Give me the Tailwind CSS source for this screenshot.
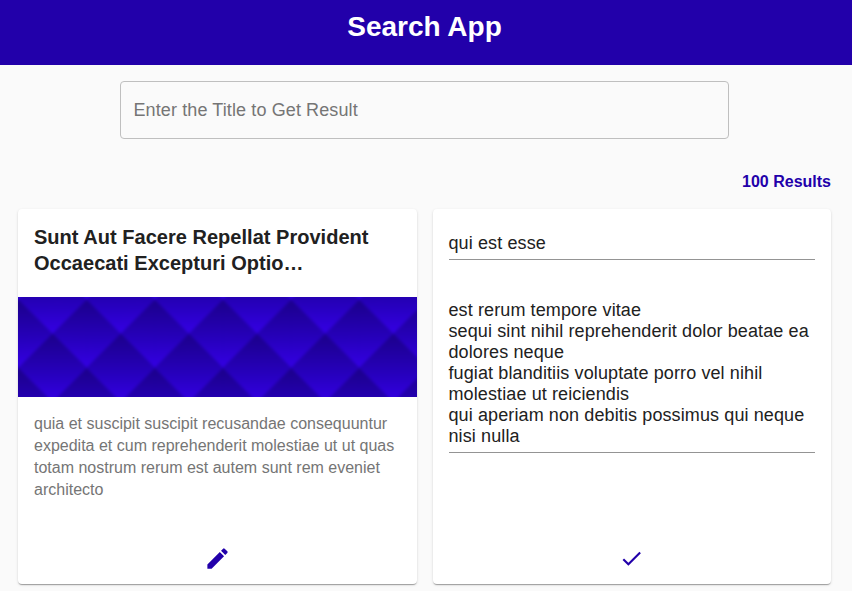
<!DOCTYPE html>
<html lang="en">
<head>
<meta charset="utf-8">
<title>Search App</title>
<script src="https://cdn.jsdelivr.net/npm/@tailwindcss/browser@4"></script>
</head>
<body class="h-[591px] overflow-hidden bg-[#fafafa] font-['Liberation_Sans',Arial,sans-serif] text-[#212121]">
<header class="flex h-[65px] justify-center bg-[#2200aa] pt-[7px] pr-[3px]">
  <h1 class="text-[28px] leading-[40px] font-bold text-white">Search App</h1>
</header>
<main class="pt-4">
  <label class="ml-[120px] block h-[58px] w-[609px] rounded border border-[#bfbfbf] px-[12.5px]">
    <input class="h-full w-full bg-transparent text-[18px] tracking-[0.11px] outline-none placeholder:text-[#757575]" placeholder="Enter the Title to Get Result">
  </label>
  <p class="mt-[30px] pr-[21px] text-right text-[16px] leading-[26px] font-bold text-[#2200aa]">100 Results</p>
  <section class="mt-[14px] flex gap-4 pl-[18px]">
    <article class="flex h-[375px] w-[399px] flex-col overflow-hidden rounded bg-white shadow-[0_2px_1px_-1px_rgba(0,0,0,0.2),0_1px_1px_0_rgba(0,0,0,0.14),0_1px_3px_0_rgba(0,0,0,0.12)]">
      <h2 class="h-[88px] px-4 pt-[15px] text-[20px] leading-[26px] font-bold tracking-[0.02px] whitespace-nowrap">Sunt Aut Facere Repellat Provident<br>Occaecati Excepturi Optio…</h2>
      <svg class="block h-[100px] w-[399px] shrink-0" viewBox="0 0 399 100">
        <defs>
          <linearGradient id="facet" x1="0" y1="0" x2="0" y2="1">
            <stop offset="0" stop-color="#1b008a"/>
            <stop offset="0.2" stop-color="#1f009b"/>
            <stop offset="0.6" stop-color="#2700be"/>
            <stop offset="1" stop-color="#3400e4"/>
          </linearGradient>
          <pattern id="quilt" x="0.5" y="2.5" width="68.15" height="68.4" patternUnits="userSpaceOnUse" viewBox="0 0 68.4 68.4" preserveAspectRatio="none">
            <rect width="68.4" height="68.4" fill="#2400b0"/>
            <path fill="url(#facet)" d="M0 0L34.2 34.2L0 68.4L-34.2 34.2Z"/>
            <path fill="url(#facet)" d="M68.4 0L102.6 34.2L68.4 68.4L34.2 34.2Z"/>
            <path fill="url(#facet)" d="M34.2 -34.2L68.4 0L34.2 34.2L0 0Z"/>
            <path fill="url(#facet)" d="M34.2 34.2L68.4 68.4L34.2 102.6L0 68.4Z"/>
          </pattern>
          <filter id="soft" x="0" y="0" width="1" height="1" color-interpolation-filters="sRGB"><feGaussianBlur stdDeviation="1.8"/></filter>
        </defs>
        <rect x="-20" y="-20" width="439" height="140" fill="url(#quilt)" filter="url(#soft)"/>
      </svg>
      <p class="px-4 pt-4 text-[16px] leading-[22px] whitespace-nowrap text-[#757575]">quia et suscipit suscipit recusandae consequuntur<br>expedita et cum reprehenderit molestiae ut ut quas<br>totam nostrum rerum est autem sunt rem eveniet<br>architecto</p>
      <button class="mx-auto mt-auto mb-3" aria-label="Edit">
        <svg class="block size-[27px] fill-[#2200aa]" viewBox="0 0 24 24"><path d="M3 17.25V21h3.75L17.81 9.94l-3.75-3.75L3 17.25zM20.71 7.04a1 1 0 0 0 0-1.41l-2.34-2.34a1 1 0 0 0-1.41 0l-1.83 1.83 3.75 3.75 1.83-1.83z"/></svg>
      </button>
    </article>
    <article class="flex h-[375px] w-[398px] flex-col overflow-hidden rounded bg-white px-4 shadow-[0_2px_1px_-1px_rgba(0,0,0,0.2),0_1px_1px_0_rgba(0,0,0,0.14),0_1px_3px_0_rgba(0,0,0,0.12)]">
      <p class="mt-[23px] h-[28px] border-b border-[#949494] pt-px text-[18px] leading-[21px] tracking-[0.11px] -indent-[0.5px]">qui est esse</p>
      <p class="mt-[39px] h-[154px] border-b border-[#949494] pt-px text-[18px] leading-[21px] tracking-[0.11px] whitespace-nowrap"><span class="-ml-[0.5px] block">est rerum tempore vitae<br>sequi sint nihil reprehenderit dolor beatae ea<br>dolores neque<br>fugiat blanditiis voluptate porro vel nihil<br>molestiae ut reiciendis<br>qui aperiam non debitis possimus qui neque<br>nisi nulla</span></p>
      <button class="mx-auto mt-auto mb-[13px] pr-px" aria-label="Save">
        <svg class="block size-[25px] fill-[#2200aa]" viewBox="0 0 24 24"><path d="M9 16.17L4.83 12l-1.42 1.41L9 19 21 7l-1.41-1.41z"/></svg>
      </button>
    </article>
  </section>
</main>
</body>
</html>
